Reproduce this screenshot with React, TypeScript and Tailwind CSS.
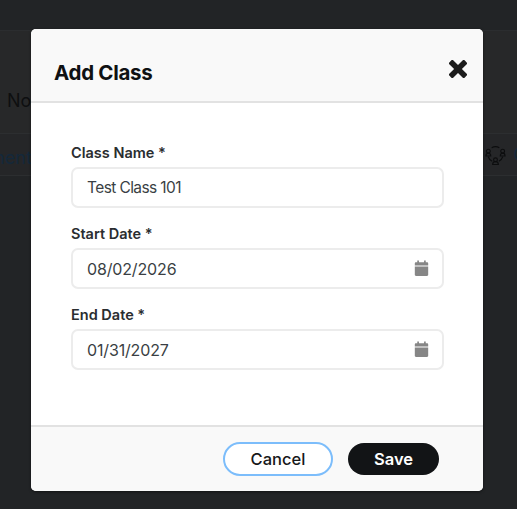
const fontStack = "font-['Inter','Noto_Sans',sans-serif]";

function CalendarIcon() {
  return (
    <svg width="17" height="17" viewBox="0 0 16 16" className="shrink-0">
      <path
        fill="#868686"
        d="M4 0.500h1.600v1.600h4.800V0.500H12v1.600h1.200c.6 0 1.100.5 1.100 1.100v2H1.700v-2c0-.6.5-1.100 1.100-1.100H4zM1.700 6.200h12.600v7.700c0 .6-.5 1.100-1.100 1.100H2.800c-.6 0-1.100-.5-1.100-1.100z"
      />
    </svg>
  );
}

function Field({ label, value, date }: { label: string; value: string; date?: boolean }) {
  return (
    <div className="flex flex-col">
      <label className="mb-[4px] text-[14.500px] leading-[20px] font-semibold text-[#2a2d30]">{label}</label>
      <div className="flex h-[41px] items-center justify-between rounded-[7px] border-2 border-[#ececec] bg-white pr-[12px] pl-[14px] text-[#3a3f44]">
        {date ? (
          <span className="text-[16px] tracking-[-0.15px]">{value}</span>
        ) : (
          <span className="text-[15.500px] tracking-[-0.6px]">{value}</span>
        )}
        {date ? <CalendarIcon /> : null}
      </div>
    </div>
  );
}

export default function App() {
  return (
    <div className={`relative h-[509px] w-[517px] overflow-hidden bg-[#222426] ${fontStack}`}>
      {/* page behind the dialog */}
      <div className="flex h-full flex-col">
        <div className="h-[31px] border-b border-[#2b2d2f]" />
        <div className="flex h-[103px] items-end border-b border-[#2c2e30] bg-[#272829] pb-[20px] pl-[7px] text-[18px] leading-[24px] text-[#0e0f10]">
          No
        </div>
        <div className="flex h-[42px] items-center justify-between border-b border-[#2c2e30] bg-[#252628] pt-[6px] text-[18px] text-[#14283a]">
          <span className="-ml-[11px]">ment</span>
          <span className="-mr-[10px] flex -translate-y-[3px] items-center gap-[7px]">
            <svg width="21" height="20" viewBox="0 0 22 20" fill="none" stroke="#0c0d0e" strokeWidth="1.200">
              <circle cx="3.500" cy="6" r="2" />
              <circle cx="18.500" cy="6" r="2" />
              <circle cx="11" cy="15" r="2" />
              <path d="M1 11c0-2 1-3 2.500-3S6 9 6 11zM16 11c0-2 1-3 2.500-3S21 9 21 11zM8 20c0-2 1-3 3-3s3 1 3 3zM7 2.500c2.500-1.500 5.500-1.500 8 0M3.500 12c.5 2 2 3.500 4 4.500M18.500 12c-.5 2-2 3.500-4 4.500" />
            </svg>
            <span>O</span>
          </span>
        </div>
        <div className="flex-1 bg-[#222426]" />
      </div>

      {/* dialog */}
      <div className="absolute inset-0 flex items-start justify-center pt-[29px]">
        <div className="mr-[3px] flex h-[462px] w-[452px] flex-col overflow-hidden rounded-[5px] bg-white shadow-[0_1px_3px_rgba(0,0,0,0.5)]">
          <div className="flex h-[74px] shrink-0 items-start justify-between border-b-2 border-[#e2e2e2] bg-[#f9f9f9] pr-[15px] pl-[23px]">
            <h2 className="mt-[30px] text-[20.500px] leading-[28px] font-bold tracking-[-0.3px] text-[#0f1113]">Add Class</h2>
            <svg width="20" height="20" viewBox="0 0 20 20" className="mt-[30px]" fill="#1c1c1c">
              <path d="M5.200 1.300 10 6.100l4.800-4.800c.5-.5 1.300-.5 1.800 0l2.100 2.100c.5.500.5 1.300 0 1.800L13.900 10l4.800 4.800c.5.500.5 1.300 0 1.800l-2.100 2.100c-.5.500-1.300.500-1.800 0L10 13.900l-4.800 4.800c-.5.500-1.300.500-1.800 0l-2.100-2.100c-.5-.5-.5-1.300 0-1.800L6.100 10 1.300 5.200c-.5-.5-.5-1.300 0-1.800l2.100-2.100c.5-.5 1.300-.5 1.800 0z" />
            </svg>
          </div>

          <div className="flex flex-1 flex-col gap-[16px] bg-white pt-[40px] pr-[39px] pl-[40px]">
            <Field label="Class Name *" value="Test Class 101" />
            <Field label="Start Date *" value="08/02/2026" date />
            <Field label="End Date *" value="01/31/2027" date />
          </div>

          <div className="flex h-[66px] shrink-0 items-center justify-end gap-[15px] border-t-2 border-[#e2e2e2] bg-[#f9f9f9] pr-[44px]">
            <button className="h-[34px] w-[110px] rounded-full border-2 border-[#7cbdfb] bg-white text-[16.500px] font-medium text-[#16181a]">
              Cancel
            </button>
            <button className="h-[32px] w-[91px] rounded-full bg-[#121416] pt-[1px] text-[16.500px] font-semibold text-white">
              Save
            </button>
          </div>
        </div>
      </div>
    </div>
  );
}
